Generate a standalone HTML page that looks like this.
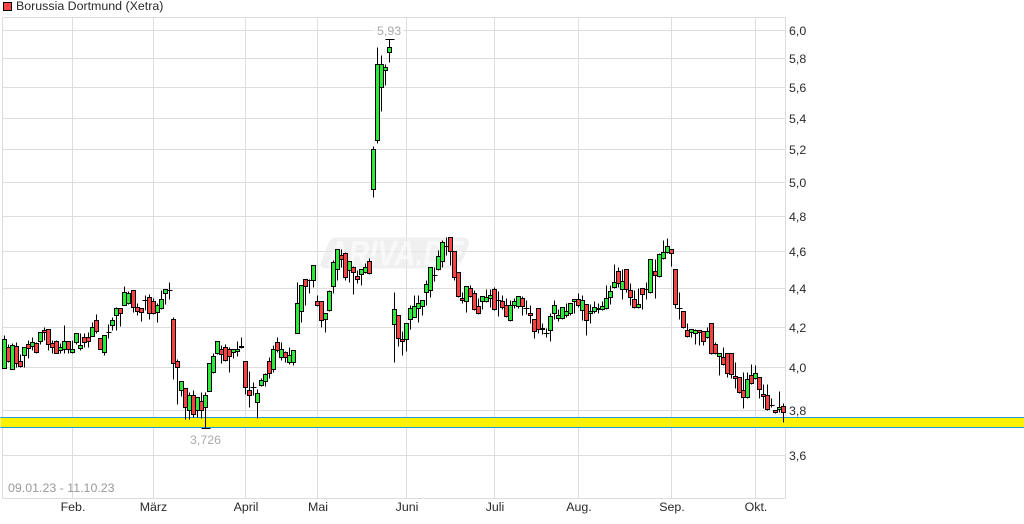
<!DOCTYPE html>
<html><head><meta charset="utf-8"><style>
html,body{margin:0;padding:0;background:#fff;width:1024px;height:524px;overflow:hidden}
svg{display:block;font-family:"Liberation Sans",sans-serif;font-size:12.4px}
text{fill:#2a2a2a}
</style></head><body>
<svg width="1024" height="524" viewBox="0 0 1024 524" xmlns="http://www.w3.org/2000/svg">
<g transform="translate(.5 .5)">
<path fill="none" stroke="#ddd" d="M2 17H785M2 30H785M2 58H785M2 87H785M2 118H785M2 149H785M2 182H785M2 216H785M2 251H785M2 288H785M2 327H785M2 367H785M2 410H785M2 455H785M2 498H785M2 17V498M72 17V498M153 17V498M245 17V498M317 17V498M406 17V498M494 17V498M578 17V498M671 17V498M755 17V498M785 17V498"/>
<path d="M335 237H462Q470 237 468 245L462 260Q459 268 450 268H326Q318 268 321 260L327 245Q330 237 335 237Z" fill="#e8e8e8" opacity=".65"/>
<text x="327" y="265" font-size="35" font-weight="bold" font-style="italic" textLength="136" lengthAdjust="spacingAndGlyphs" style="fill:#fff;opacity:.6">ARIVA.DE</text>
<rect x="0" y="417" width="1024" height="10" fill="#fff200"/>
<path fill="none" stroke="#f4ea40" d="M72 418V427M153 418V427M245 418V427M317 418V427M406 418V427M494 418V427M578 418V427M671 418V427M755 418V427M785 418V427"/>
<path fill="none" stroke="#1b9ad6" d="M0 417H1024M0 427H1024"/>
<rect x="373" y="24" width="30" height="13" fill="#fff" opacity=".8"/>
<path fill="none" stroke="#000" d="M4 335V368M8 344V362M12 343V369M16 342V367M20 354V367M24 347V367M28 340V358M32 337V350M36 342V353M40 332V344M44 327V340M48 329V350M52 340V353M56 340V353M60 343V353M64 325V353M68 341V353M72 340V353M76 333V344M80 333V350M84 333V347M88 332V347M92 322V336M96 314V333M100 338V349M104 335V355M108 324V338M106 332h5M112 317V330M116 307V330M120 308V326M124 286V305M128 291V304M133 290V312M137 303V315M141 308V321M145 295V310M142 300h6M149 294V319M153 298V314M157 303V322M161 290V309M165 289V304M169 282V299M166 290h6M173 317V379M177 359V404M181 381V396M185 388V419M189 392V419M193 390V417M197 397V417M201 392V418M205 392V428M201 428h9M209 363V391M213 353V373M217 341V354M221 345V363M225 344V361M229 347V372M233 349V358M237 341V356M241 337V348M245 361V394M249 371V407M253 382V395M250 387h6M257 389V418M261 378V386M265 373V386M269 357V378M273 345V372M277 337V352M281 342V360M285 351V362M289 347V364M293 350V365M297 282V333M301 285V322M305 279V305M309 279V293M307 280h5M313 265V287M317 295V306M321 301V327M325 313V332M329 290V311M333 260V293M337 249V280M341 249V267M345 252V280M349 261V282M353 266V294M357 270V283M361 269V285M365 263V273M369 258V274M373 146V197M377 47V143M381 55V111M385 64V85M389 39V62M385 39h9M394 292V362M398 315V346M402 331V355M406 323V351M410 305V329M414 295V317M418 295V322M422 300V315M426 280V305M430 267V297M434 267V281M431 275h6M438 250V270M442 240V267M446 237V255M443 246h6M450 237V265M454 251V280M458 272V297M462 292V303M466 286V312M470 285V297M474 290V310M478 298V314M482 296V309M486 289V302M490 289V307M494 287V310M498 291V316M495 300h6M502 295V309M506 298V317M510 300V321M514 298V308M518 296V308M522 296V315M526 300V314M523 308h6M530 305V323M534 319V338M538 308V333M542 323V334M546 328V337M543 333h6M550 313V341M554 300V319M558 309V321M562 307V319M566 303V317M570 303V315M574 299V313M578 293V307M582 295V320M586 304V335M590 304V323M594 301V313M598 303V313M602 301V310M606 285V309M610 285V304M614 264V288M618 267V287M622 269V299M626 269V292M630 283V305M634 290V308M638 288V308M642 288V309M646 282V299M643 289h6M650 259V293M655 259V298M659 253V277M663 240V259M667 238V253M671 249V266M675 269V308M679 292V319M676 308h6M683 311V328M687 323V337M691 329V337M695 329V344M699 330V345M703 331V345M707 327V338M711 323V354M715 342V354M719 353V375M723 347V365M727 353V377M731 353V378M735 362V388M739 377V393M743 372V408M747 372V398M751 364V384M755 365V379M759 377V398M763 384V408M767 384V410M771 398V407M768 405h6M775 410V413M779 391V412M783 403V422"/>
<path fill="#2ee83a" stroke="#000" d="M2 339h4v29h-4zM10 345h4v24h-4zM22 347h4v8h-4zM30 342h4v4h-4zM38 332h4v9h-4zM58 347h4v3h-4zM62 341h4v8h-4zM70 349h4v3h-4zM74 333h4v9h-4zM78 345h4v3h-4zM90 327h4v9h-4zM102 335h4v17h-4zM110 320h4v5h-4zM114 308h4v7h-4zM122 292h4v13h-4zM126 293h4v10h-4zM155 305h4v7h-4zM159 299h4v9h-4zM163 289h4v4h-4zM179 381h4v9h-4zM187 395h4v15h-4zM195 397h4v13h-4zM203 395h4v12h-4zM207 363h4v28h-4zM211 356h4v16h-4zM215 341h4v12h-4zM231 349h4v3h-4zM235 349h4v2h-4zM239 346h4v1h-4zM255 393h4v9h-4zM259 380h4v5h-4zM263 374h4v7h-4zM271 349h4v20h-4zM279 349h4v8h-4zM287 355h4v7h-4zM291 350h4v12h-4zM295 303h4v30h-4zM299 285h4v26h-4zM311 265h4v15h-4zM323 313h4v6h-4zM327 291h4v19h-4zM331 262h4v24h-4zM335 249h4v20h-4zM347 261h4v9h-4zM359 269h4v5h-4zM363 267h4v5h-4zM371 149h4v40h-4zM375 64h4v76h-4zM379 64h4v23h-4zM383 67h4v3h-4zM387 47h4v5h-4zM392 309h4v15h-4zM404 323h4v16h-4zM408 308h4v11h-4zM412 306h4v11h-4zM416 303h4v5h-4zM420 300h4v6h-4zM424 284h4v8h-4zM428 267h4v23h-4zM436 256h4v13h-4zM440 242h4v19h-4zM464 286h4v15h-4zM480 296h4v5h-4zM484 297h4v4h-4zM488 295h4v3h-4zM508 305h4v15h-4zM512 301h4v4h-4zM516 296h4v10h-4zM548 316h4v14h-4zM552 305h4v8h-4zM556 315h4v3h-4zM560 307h4v11h-4zM564 311h4v4h-4zM568 303h4v10h-4zM572 299h4v2h-4zM580 300h4v10h-4zM588 311h4v2h-4zM592 307h4v4h-4zM596 308h4v1h-4zM600 306h4v3h-4zM604 298h4v10h-4zM608 291h4v6h-4zM612 282h4v5h-4zM620 281h4v8h-4zM636 304h4v3h-4zM648 259h4v33h-4zM657 254h4v22h-4zM661 252h4v6h-4zM665 246h4v6h-4zM689 329h4v3h-4zM693 330h4v3h-4zM705 331h4v6h-4zM717 353h4v3h-4zM745 379h4v18h-4zM753 373h4v5h-4zM777 407h4v2h-4z"/>
<path fill="#f84242" stroke="#000" d="M6 347h4v14h-4zM14 346h4v17h-4zM18 361h4v5h-4zM26 344h4v4h-4zM34 343h4v9h-4zM42 330h4v2h-4zM46 329h4v15h-4zM50 343h4v4h-4zM54 341h4v12h-4zM66 341h4v8h-4zM82 337h4v5h-4zM86 337h4v4h-4zM94 320h4v11h-4zM98 338h4v11h-4zM118 308h4v5h-4zM131 290h4v17h-4zM135 307h4v4h-4zM139 308h4v4h-4zM147 297h4v16h-4zM151 301h4v12h-4zM171 319h4v44h-4zM175 361h4v6h-4zM183 388h4v19h-4zM191 395h4v19h-4zM199 401h4v9h-4zM219 349h4v5h-4zM223 347h4v13h-4zM227 349h4v7h-4zM243 361h4v26h-4zM247 390h4v5h-4zM267 361h4v12h-4zM275 342h4v8h-4zM283 352h4v5h-4zM303 279h4v7h-4zM315 301h4v4h-4zM319 301h4v19h-4zM339 255h4v4h-4zM343 253h4v24h-4zM351 267h4v5h-4zM355 276h4v3h-4zM367 261h4v12h-4zM396 315h4v23h-4zM400 339h4v2h-4zM448 237h4v14h-4zM452 251h4v26h-4zM456 272h4v24h-4zM460 298h4v2h-4zM468 288h4v8h-4zM472 293h4v16h-4zM476 306h4v7h-4zM492 289h4v20h-4zM500 301h4v6h-4zM504 305h4v11h-4zM520 298h4v8h-4zM528 313h4v2h-4zM532 319h4v12h-4zM536 308h4v21h-4zM540 328h4v1h-4zM576 299h4v6h-4zM584 304h4v16h-4zM616 271h4v12h-4zM624 269h4v20h-4zM628 290h4v7h-4zM632 299h4v8h-4zM640 288h4v6h-4zM653 271h4v4h-4zM669 249h4v4h-4zM673 269h4v35h-4zM681 311h4v16h-4zM685 330h4v6h-4zM697 330h4v2h-4zM701 331h4v10h-4zM709 323h4v30h-4zM713 344h4v9h-4zM721 357h4v7h-4zM725 353h4v20h-4zM729 353h4v21h-4zM733 376h4v2h-4zM737 377h4v15h-4zM741 390h4v7h-4zM749 375h4v8h-4zM757 377h4v12h-4zM761 394h4v2h-4zM765 395h4v14h-4zM773 410h4v2h-4zM781 406h4v6h-4z"/>
<rect x="3" y="2" width="8" height="8" fill="#f44" stroke="#000"/>
</g>
<text x="16" y="10">Borussia Dortmund (Xetra)</text>
<text x="377" y="35" style="fill:#aaa">5,93</text>
<text x="190" y="444" style="fill:#aaa">3,726</text>
<text x="8" y="492" style="fill:#999">09.01.23 - 11.10.23</text>
<g>
<text x="789" y="35">6,0</text>
<text x="789" y="63">5,8</text>
<text x="789" y="92">5,6</text>
<text x="789" y="123">5,4</text>
<text x="789" y="154">5,2</text>
<text x="789" y="187">5,0</text>
<text x="789" y="221">4,8</text>
<text x="789" y="256">4,6</text>
<text x="789" y="293">4,4</text>
<text x="789" y="332">4,2</text>
<text x="789" y="372">4,0</text>
<text x="789" y="415">3,8</text>
<text x="789" y="460">3,6</text>
</g>
<g text-anchor="middle">
<text x="73" y="511">Feb.</text>
<text x="153.5" y="511">März</text>
<text x="246" y="511">April</text>
<text x="318" y="511">Mai</text>
<text x="407" y="511">Juni</text>
<text x="495" y="511">Juli</text>
<text x="579" y="511">Aug.</text>
<text x="672" y="511">Sep.</text>
<text x="756" y="511">Okt.</text>
</g>
</svg>
</body></html>
